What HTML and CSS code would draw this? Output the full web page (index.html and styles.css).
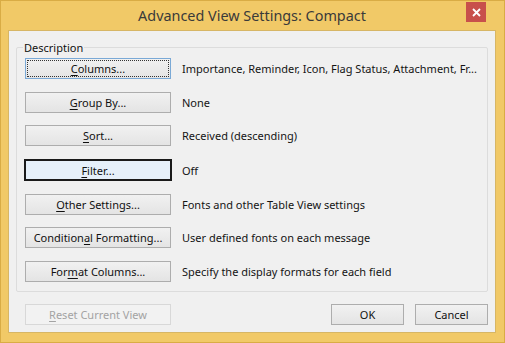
FILE: index.html
```html
<!DOCTYPE html>
<html lang="en">
<head>
    <meta charset="UTF-8">
    <title>Advanced View Settings: Compact</title>
    <link rel="stylesheet" href="styles.css">
</head>
<body>
    <div class="window">
        <div class="titlebar">
            <span class="title">Advanced View Settings: Compact</span>
            <span class="close">
                <svg width="9" height="9" viewBox="0 0 9 9"><path d="M1 1L8 8M8 1L1 8" stroke="#fff" stroke-width="1.8"/></svg>
            </span>
        </div>
        <div class="client">
            <fieldset class="group">
                <legend>Description</legend>
                <div class="rows">
                    <button class="btn focused"><u>C</u>olumns...</button>
                    <span class="desc">Importance, Reminder, Icon, Flag Status, Attachment, Fr...</span>

                    <button class="btn"><u>G</u>roup By...</button>
                    <span class="desc">None</span>

                    <button class="btn"><u>S</u>ort...</button>
                    <span class="desc">Received (descending)</span>

                    <button class="btn default"><u>F</u>ilter...</button>
                    <span class="desc">Off</span>

                    <button class="btn"><u>O</u>ther Settings...</button>
                    <span class="desc">Fonts and other Table View settings</span>

                    <button class="btn">Condition<u>a</u>l Formatting...</button>
                    <span class="desc">User defined fonts on each message</span>

                    <button class="btn">For<u>m</u>at Columns...</button>
                    <span class="desc">Specify the display formats for each field</span>
                </div>
            </fieldset>
            <div class="footer">
                <button class="btn disabled" disabled><u>R</u>eset Current View</button>
                <div class="actions">
                    <button class="btn small">OK</button>
                    <button class="btn small">Cancel</button>
                </div>
            </div>
        </div>
    </div>
</body>
</html>
```

FILE: styles.css
```css
body {
    margin: 0;
    font-family: "Noto Sans", "Open Sans", sans-serif;
    background: #f0c864;
}
.window {
    width: 505px;
    height: 343px;
    box-sizing: border-box;
    border: 1px solid #d9ac45;
    background: #f1c967;
    padding: 0 8px 9px 7px;
    display: flex;
    flex-direction: column;
}
.titlebar {
    height: 29px;
    display: flex;
    align-items: center;
    justify-content: center;
    position: relative;
}
.title {
    font-size: 14.4px;
    color: #3a3a3a;
}
.close {
    position: absolute;
    right: 10px;
    top: 1px;
    width: 20px;
    height: 20px;
    background: #c8504b;
    display: flex;
    align-items: center;
    justify-content: center;
}
.client {
    flex: 1;
    background: #f0f0f0;
    border: 1px solid #d7b665;
    padding: 0 7px;
}
.group {
    margin: 9px 0 0 0;
    padding: 0 0 6px 8px;
    border: 1px solid #dcdcdc;
    border-radius: 2px;
    height: 244px;
    min-width: 0;
}
legend {
    font-size: 11px;
    color: #111;
    padding: 0 1px;
    margin-left: -2px;
}
.rows {
    display: grid;
    grid-template-columns: 146px 1fr;
    column-gap: 11px;
    row-gap: 12.7px;
    align-items: center;
    margin-top: 3px;
}
.btn {
    height: 21px;
    box-sizing: border-box;
    font-family: inherit;
    font-size: 11px;
    color: #111;
    background: linear-gradient(#f1f1f1, #e4e4e4);
    border: 1px solid #adadad;
    padding: 0;
    line-height: 1;
}
.btn u {
    text-underline-offset: 2px;
}
.btn.focused {
    border-color: #7aa9d6;
    outline: 1px dotted #333;
    outline-offset: -3px;
}
.btn.default {
    border: 2px solid #1a1a1a;
    background: #e6f0fa;
    height: 22px;
    margin: 0 -1px;
    width: 148px;
}
.btn.disabled {
    color: #a3a3a3;
    border-color: #d8d8d8;
    background: #f2f2f2;
    width: 146px;
}
.desc {
    font-size: 11px;
    color: #141414;
    white-space: nowrap;
}
.footer {
    display: flex;
    justify-content: space-between;
    align-items: center;
    margin-top: 12px;
    padding: 0 0 0 9px;
}
.actions {
    display: flex;
    gap: 11px;
}
.btn.small {
    width: 73px;
}
```
